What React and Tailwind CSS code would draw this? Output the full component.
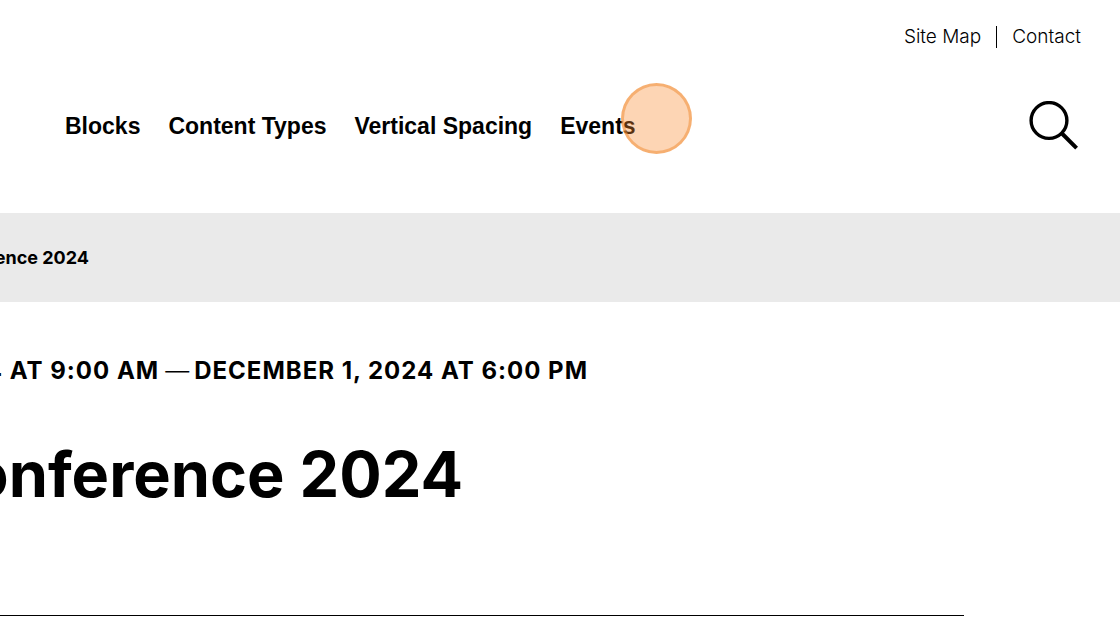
const navItems = ['Blocks', 'Content Types', 'Vertical Spacing', 'Events'];

function SearchIcon() {
  return (
    <svg viewBox="0 0 52 50" className="h-[50px] w-[52px]" fill="none" stroke="black" aria-hidden="true">
      <circle cx="20" cy="19.5" r="17.9" strokeWidth="3.4" />
      <path d="M32.5 32 L47.6 47.2" strokeWidth="4" />
    </svg>
  );
}

export default function App() {
  return (
    <div className="overflow-x-hidden bg-white font-['Inter',sans-serif] text-black">
      <header className="flex flex-col pt-[25px] pr-[39px] pb-[61px] pl-[65px]">
        <nav aria-label="Utility" className="flex h-6 items-center justify-end text-[19px] leading-6 font-light">
          <a href="#site-map">Site Map</a>
          <span aria-hidden="true" className="mx-[15px] h-[22px] w-px bg-black" />
          <a href="#contact">Contact</a>
        </nav>
        <div className="mt-[51px] flex h-[52px] items-center justify-between">
          <nav
            aria-label="Main"
            className="relative flex gap-7 font-['Liberation_Sans',sans-serif] text-[23px] leading-7 font-bold whitespace-nowrap"
          >
            {navItems.map((item) => (
              <a key={item} href="#main">{item}</a>
            ))}
            <span
              aria-hidden="true"
              className="pointer-events-none absolute -top-[29px] -right-14 size-[71px] rounded-full border-3 border-[#f0892f]/50 bg-[#f98a2e]/36"
            />
          </nav>
          <button type="button" aria-label="Search">
            <SearchIcon />
          </button>
        </div>
      </header>

      <div className="bg-[#eaeaea] py-8">
        <div className="flex w-[89px] justify-end text-[18px] leading-[25px] font-bold whitespace-nowrap">
          Conference 2024
        </div>
      </div>

      <main id="main" className="pt-[53px] pr-[156px] pb-2.5">
        <div className="flex w-[588px] items-center justify-end text-2xl leading-8 font-bold tracking-[1px] whitespace-nowrap">
          <span>2024 AT 9:00 AM</span>
          <span className="mr-1 ml-1.5 font-light">—</span>
          <span>DECEMBER 1, 2024 AT 6:00 PM</span>
        </div>
        <div className="mt-[47px] border-b border-black pb-[101px]">
          <h1 className="flex w-[463px] justify-end text-[63px] leading-20 font-bold whitespace-nowrap">
            Conference 2024
          </h1>
        </div>
      </main>
    </div>
  );
}
